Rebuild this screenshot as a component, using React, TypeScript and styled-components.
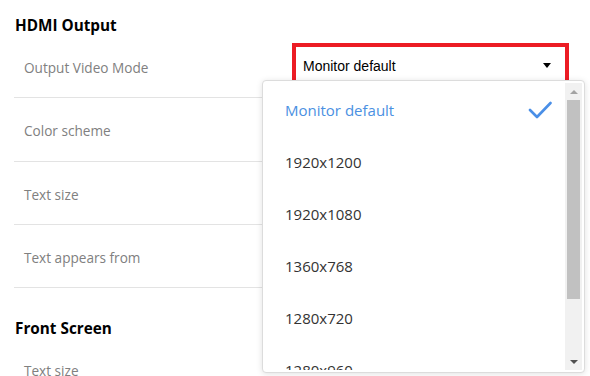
import React from 'react';
import styled, { createGlobalStyle } from 'styled-components';

const GlobalStyle = createGlobalStyle`
  html, body {
    margin: 0;
    padding: 0;
    background: #ffffff;
    overflow: hidden;
  }
  body {
    font-family: "Open Sans", "Noto Sans", sans-serif;
  }
`;

const Page = styled.div`
  width: 590px;
  height: 376px;
  padding-left: 14px;
  box-sizing: border-box;
  overflow: hidden;
`;

const Section = styled.section<{ first?: boolean }>`
  margin-top: ${p => (p.first ? '0' : '15px')};
`;

const SectionTitle = styled.h2`
  margin: 0;
  height: 35px;
  box-sizing: border-box;
  padding: 15px 0 0 1px;
  font-size: 15.3px;
  line-height: 20px;
  font-weight: 700;
  color: #000000;
`;

const Row = styled.div`
  display: flex;
  align-items: center;
  justify-content: space-between;
  height: 63.34px;
  box-sizing: border-box;
  margin-right: 21px;
  padding-left: 10px;
  border-bottom: 1px solid #e3e3e3;
`;

const Label = styled.span`
  font-size: 13.6px;
  color: #808080;
  padding-top: 3px;
`;

const SelectWrap = styled.div`
  position: relative;
  align-self: flex-start;
  margin-top: 8px;
`;

const SelectBox = styled.div`
  display: flex;
  align-items: center;
  justify-content: space-between;
  width: 277px;
  height: 44px;
  box-sizing: border-box;
  border: 4px solid #ec1c24;
  padding: 1px 14px 0 7px;
  font-family: "Liberation Sans", Arial, sans-serif;
  font-size: 14px;
  color: #000000;
`;

const Caret = styled.span`
  width: 0;
  height: 0;
  border-left: 4.5px solid transparent;
  border-right: 4.5px solid transparent;
  border-top: 5px solid #000000;
`;

const Menu = styled.div`
  position: absolute;
  left: -30px;
  top: 37px;
  width: 323px;
  height: 293px;
  box-sizing: border-box;
  display: flex;
  padding: 2px 2px 2px 0;
  background: #ffffff;
  border: 1px solid #dcdcdc;
  border-radius: 4px;
  box-shadow: 0 1px 6px rgba(0, 0, 0, 0.12);
  z-index: 10;
`;

const OptionList = styled.ul`
  flex: 1;
  margin: 0;
  padding: 0;
  list-style: none;
  overflow: hidden;
`;

const Option = styled.li<{ selected?: boolean }>`
  display: flex;
  align-items: center;
  justify-content: space-between;
  height: 52px;
  padding: 1px 13px 0 22px;
  box-sizing: border-box;
  font-size: 15px;
  color: ${p => (p.selected ? '#4a90e2' : '#333333')};
`;

const Scrollbar = styled.div`
  width: 17px;
  display: flex;
  flex-direction: column;
  background: #f1f1f1;
`;

const ScrollButton = styled.div<{ down?: boolean; dim?: boolean }>`
  height: 17px;
  display: flex;
  align-items: center;
  justify-content: center;

  &::before {
    content: '';
    width: 0;
    height: 0;
    border-left: 4px solid transparent;
    border-right: 4px solid transparent;
    ${p =>
      p.down
        ? `border-top: 4px solid ${p.dim ? '#a3a3a3' : '#505050'};`
        : `border-bottom: 4px solid ${p.dim ? '#a3a3a3' : '#505050'};`}
  }
`;

const Thumb = styled.div`
  height: 199px;
  margin: 0 2px;
  background: #c1c1c1;
`;

const Spacer = styled.div`
  flex: 1;
`;

const Check = () => (
  <svg width="24" height="18" viewBox="0 0 24 18">
    <polyline
      points="2,9 9,16 22.5,2"
      fill="none"
      stroke="#4a8fe7"
      strokeWidth="2.6"
      strokeLinecap="round"
      strokeLinejoin="round"
    />
  </svg>
);

const modes = ['Monitor default', '1920x1200', '1920x1080', '1360x768', '1280x720', '1280x960'];

const App: React.FC = () => {
  const current = 'Monitor default';

  return (
    <Page>
      <GlobalStyle />
      <Section first>
        <SectionTitle>HDMI Output</SectionTitle>
        <Row>
          <Label>Output Video Mode</Label>
          <SelectWrap>
            <SelectBox>
              {current}
              <Caret />
            </SelectBox>
            <Menu>
              <OptionList>
                {modes.map(m => (
                  <Option key={m} selected={m === current}>
                    {m}
                    {m === current && <Check />}
                  </Option>
                ))}
              </OptionList>
              <Scrollbar>
                <ScrollButton dim />
                <Thumb />
                <Spacer />
                <ScrollButton down />
              </Scrollbar>
            </Menu>
          </SelectWrap>
        </Row>
        <Row>
          <Label>Color scheme</Label>
        </Row>
        <Row>
          <Label>Text size</Label>
        </Row>
        <Row>
          <Label>Text appears from</Label>
        </Row>
      </Section>
      <Section>
        <SectionTitle>Front Screen</SectionTitle>
        <Row>
          <Label>Text size</Label>
        </Row>
      </Section>
    </Page>
  );
};

export default App;
